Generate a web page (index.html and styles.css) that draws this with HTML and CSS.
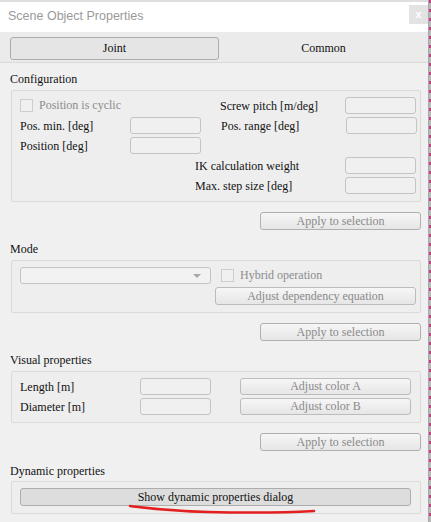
FILE: index.html
```html
<!DOCTYPE html>
<html>
<head>
<meta charset="utf-8">
<link rel="stylesheet" href="styles.css">
</head>
<body>
<div class="frame">
  <div class="titlebar">
    <span class="title">Scene Object Properties</span>
    <span class="close">x</span>
  </div>
  <div class="tabs">
    <div class="tab active">Joint</div>
    <div class="tab">Common</div>
  </div>
  <div class="content">
    <div class="label l-config">Configuration</div>
    <div class="group">
      <div class="row">
        <div class="chk w200 disabled"><span class="box"></span>Position is cyclic</div>
        <span class="lbl w125">Screw pitch [m/deg]</span>
        <span class="input"></span>
      </div>
      <div class="row">
        <span class="lbl w110">Pos. min. [deg]</span>
        <span class="input"></span>
        <span class="sp20"></span>
        <span class="lbl w125">Pos. range [deg]</span>
        <span class="input"></span>
      </div>
      <div class="row">
        <span class="lbl w110">Position [deg]</span>
        <span class="input"></span>
      </div>
      <div class="row">
        <span class="sp175"></span>
        <span class="lbl w150">IK calculation weight</span>
        <span class="input"></span>
      </div>
      <div class="row">
        <span class="sp175"></span>
        <span class="lbl w150">Max. step size [deg]</span>
        <span class="input"></span>
      </div>
    </div>
    <div class="apply-row"><div class="btn apply">Apply to selection</div></div>

    <div class="label l-mode">Mode</div>
    <div class="group">
      <div class="row">
        <div class="combo"><span class="arrow"></span></div>
        <span class="sp10"></span>
        <div class="chk disabled"><span class="box"></span>Hybrid operation</div>
      </div>
      <div class="row row18">
        <span class="sp195"></span>
        <div class="btn dep">Adjust dependency equation</div>
      </div>
    </div>
    <div class="apply-row"><div class="btn apply">Apply to selection</div></div>

    <div class="label l-visual">Visual properties</div>
    <div class="group">
      <div class="row">
        <span class="lbl w120">Length [m]</span>
        <span class="input"></span>
        <span class="sp29"></span>
        <div class="btn color">Adjust color A</div>
      </div>
      <div class="row">
        <span class="lbl w120">Diameter [m]</span>
        <span class="input"></span>
        <span class="sp29"></span>
        <div class="btn color">Adjust color B</div>
      </div>
    </div>
    <div class="apply-row"><div class="btn apply">Apply to selection</div></div>

    <div class="label l-dyn">Dynamic properties</div>
    <div class="group dyn-group">
      <div class="btn show">Show dynamic properties dialog</div>
      <svg class="scribble" width="200" height="14" viewBox="0 0 200 14">
        <path d="M2 3 C 20 5, 40 8, 80 9 S 150 10, 186 8" fill="none" stroke="#e3201f" stroke-width="2.6" stroke-linecap="round"/>
      </svg>
    </div>
  </div>
</div>
</body>
</html>
```

FILE: styles.css
```css
html, body {
  margin: 0;
  padding: 0;
}
body {
  width: 431px;
  height: 522px;
  overflow: hidden;
  background: repeating-linear-gradient(180deg, #c04080 0 3px, #b8b8b8 3px 9px);
  font-family: "Liberation Serif", "DejaVu Serif Condensed", "DejaVu Serif", serif;
  font-size: 12px;
  color: #111;
}
.frame {
  width: 429px;
  height: 522px;
  background: #f0f0f0;
  border-right: 1px solid #a8a8a8;
  box-sizing: border-box;
  display: flex;
  flex-direction: column;
}
.titlebar {
  height: 30px;
  border-top: 2px solid #dedede;
  background: #ffffff;
  display: flex;
  align-items: center;
  justify-content: space-between;
  padding-left: 8px;
}
.title {
  font-family: "Liberation Sans", Arial, sans-serif;
  font-size: 12.5px;
  color: #9a9a9a;
  margin-top: -2px;
}
.close {
  width: 19px;
  height: 19px;
  background: #e3e3e3;
  color: #ffffff;
  font-family: "Liberation Sans", Arial, sans-serif;
  font-size: 11px;
  font-weight: bold;
  display: flex;
  align-items: center;
  justify-content: center;
  margin-top: -6px;
}
.tabs {
  background: #ebebeb;
  border-bottom: 1px solid #d9d9d9;
  display: flex;
  padding: 5px 0 0 10px;
  height: 25px;
}
.tab {
  width: 209px;
  height: 23px;
  box-sizing: border-box;
  display: flex;
  align-items: center;
  justify-content: center;
}
.tab.active {
  background: #e5e5e5;
  border: 1px solid #acacac;
  border-radius: 3px;
}
.content {
  padding: 6px 0 0 11px;
  width: 410px;
  display: flex;
  flex-direction: column;
}
.label {
  height: 20px;
  line-height: 21px;
  margin-left: -1px;
}
.l-config { margin-top: 0; }
.l-mode { margin-top: 9px; }
.l-visual { margin-top: 9px; }
.l-dyn { margin-top: 10px; }
.group {
  margin-top: 1px;
  border: 1px solid #dadada;
  border-radius: 2px;
  background: #eeeeee;
  padding: 6px 0 7px 8px;
  display: flex;
  flex-direction: column;
  gap: 3px;
}
.row {
  height: 17px;
  display: flex;
  align-items: center;
}
.row18 { height: 18px; }
.lbl {
  white-space: nowrap;
  padding-top: 1px;
}
.w110 { width: 110px; flex: none; }
.w120 { width: 120px; flex: none; }
.w125 { width: 125px; flex: none; }
.w150 { width: 150px; flex: none; }
.w200 { width: 200px; flex: none; }
.sp10 { width: 10px; flex: none; }
.sp20 { width: 20px; flex: none; }
.sp29 { width: 29px; flex: none; }
.sp175 { width: 175px; flex: none; }
.sp195 { width: 195px; flex: none; }
.input {
  width: 71px;
  height: 17px;
  box-sizing: border-box;
  border: 1px solid #c4c4c4;
  border-radius: 3px;
  background: #f0f0f0;
  flex: none;
}
.chk {
  display: flex;
  align-items: center;
  white-space: nowrap;
}
.chk.disabled { color: #8c8c8c; }
.box {
  width: 13px;
  height: 13px;
  box-sizing: border-box;
  border: 1px solid #cdcdcd;
  background: #f0f0f0;
  margin-right: 6px;
  flex: none;
}
.combo {
  width: 191px;
  height: 17px;
  box-sizing: border-box;
  border: 1px solid #c4c4c4;
  border-radius: 3px;
  background: #f2f2f2;
  position: relative;
  flex: none;
}
.arrow {
  position: absolute;
  right: 9px;
  top: 6px;
  width: 0;
  height: 0;
  border-left: 4px solid transparent;
  border-right: 4px solid transparent;
  border-top: 4px solid #a8a8a8;
}
.btn {
  box-sizing: border-box;
  border: 1px solid #bcbcbc;
  border-radius: 3px;
  background: linear-gradient(#f6f6f6, #e6e6e6);
  color: #8a8a8a;
  display: flex;
  align-items: center;
  justify-content: center;
  white-space: nowrap;
  flex: none;
}
.apply-row {
  display: flex;
  justify-content: flex-end;
  margin-top: 10px;
}
.btn.apply {
  width: 161px;
  height: 18px;
  border-color: #b0b0b0;
}
.btn.dep {
  width: 201px;
  height: 18px;
}
.btn.color {
  width: 171px;
  height: 17px;
}
.dyn-group {
  position: relative;
  margin-top: 0;
}
.btn.show {
  width: 391px;
  height: 18px;
  background: #dddddd;
  border-color: #adadad;
  color: #111;
}
.scribble {
  position: absolute;
  left: 116px;
  top: 21px;
}
```
